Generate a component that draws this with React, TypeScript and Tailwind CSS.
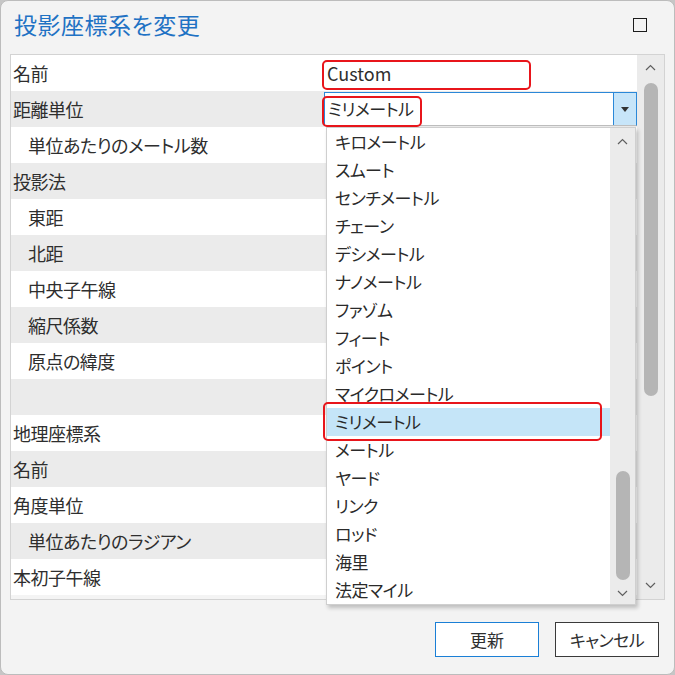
const font = "[font-family:'Noto_Sans_CJK_JP',sans-serif] [font-feature-settings:'palt']"

type Row = { label: string; indent?: boolean }

const rows: Row[] = [
  { label: "名前" },
  { label: "距離単位" },
  { label: "単位あたりのメートル数", indent: true },
  { label: "投影法" },
  { label: "東距", indent: true },
  { label: "北距", indent: true },
  { label: "中央子午線", indent: true },
  { label: "縮尺係数", indent: true },
  { label: "原点の緯度", indent: true },
  { label: "" },
  { label: "地理座標系" },
  { label: "名前" },
  { label: "角度単位" },
  { label: "単位あたりのラジアン", indent: true },
  { label: "本初子午線" },
]

const units = [
  "キロメートル",
  "スムート",
  "センチメートル",
  "チェーン",
  "デシメートル",
  "ナノメートル",
  "ファゾム",
  "フィート",
  "ポイント",
  "マイクロメートル",
  "ミリメートル",
  "メートル",
  "ヤード",
  "リンク",
  "ロッド",
  "海里",
  "法定マイル",
]

function Chevron({ up }: { up?: boolean }) {
  return (
    <svg width="11" height="7" viewBox="0 0 11 7" className="block">
      <polyline
        points={up ? "1,6 5.5,1.5 10,6" : "1,1 5.5,5.5 10,1"}
        fill="none"
        stroke="#5f5f5f"
        strokeWidth="1.2"
      />
    </svg>
  )
}

function ComboBox() {
  return (
    <div className="ml-px flex h-[34px] w-full border border-[#2b88d8] border-b-[#bdbdbd] bg-white">
      <div className="flex flex-1 items-center pl-[3px] text-[17px] tracking-[-0.5px] text-[#2a2a2a]">ミリメートル</div>
      <div className="flex w-[23px] items-center justify-center border-l border-[#2b88d8] bg-[#c7e5f9]">
        <svg width="8" height="5" viewBox="0 0 8 5">
          <polygon points="0,0 8,0 4,5" fill="#333" />
        </svg>
      </div>
    </div>
  )
}

export default function App() {
  return (
    <div className={`relative h-[675px] w-[675px] bg-[#c6c6c6] ${font}`}>
      <div className="flex h-full flex-col overflow-hidden rounded-[8px] border border-[#bcbcbc] bg-[#f3f3f3]">
        {/* Title bar */}
        <div className="flex h-[53px] shrink-0 items-center justify-between pb-[6px] pl-[13px] pr-[27px]">
          <h1 className="text-[23px] leading-none tracking-[0.5px] text-[#1f72c4]">投影座標系を変更</h1>
          <div className="h-[14px] w-[14px] border-[1.5px] border-[#1c1c1c]" />
        </div>

        {/* Property grid */}
        <div className="mx-[9px] flex h-[546px] shrink-0 border border-[#d3d3d3] bg-[#f4f4f4]">
          <div className="flex flex-1 flex-col">
            {rows.map((row, i) => (
              <div
                key={i}
                className={`flex h-[36px] shrink-0 items-center ${i % 2 === 1 ? "bg-[#ebebeb]" : "bg-white"}`}
              >
                <div
                  className={`w-[312px] shrink-0 text-[18px] tracking-[-0.5px] text-[#2e2e2e] ${row.indent ? "pl-[17px]" : "pl-[2px]"}`}
                >
                  {row.label}
                </div>
                <div className="flex h-full flex-1 items-center">
                  {i === 0 && <span className="pl-[4px] text-[18px] text-[#2e2e2e]">Custom</span>}
                  {i === 1 && <ComboBox />}
                </div>
              </div>
            ))}
          </div>
          <div className="flex w-[27px] shrink-0 flex-col items-center bg-[#ebebeb] py-[9px]">
            <Chevron up />
            <div className="mt-[12px] h-[313px] w-[14px] rounded-full bg-[#b5b5b5]" />
            <div className="flex-1" />
            <div className="mb-[1px]">
              <Chevron />
            </div>
          </div>
        </div>

        {/* Buttons */}
        <div className="flex justify-end gap-[16px] pr-[15px] pt-[22px]">
          <button className="h-[35px] w-[104px] border-[1.5px] border-[#1a7fd6] bg-white text-[17px] text-[#2e2e2e]">
            更新
          </button>
          <button className="h-[35px] w-[104px] border-[1.5px] border-[#3a3a3a] bg-white text-[17px] tracking-[-0.5px] text-[#2e2e2e]">
            キャンセル
          </button>
        </div>
      </div>

      {/* Dropdown list */}
      <div className="absolute left-[326px] top-[127px] flex h-[478px] w-[310px] border border-[#cfcfcf] bg-white shadow-[2px_3px_4px_rgba(0,0,0,0.22)]">
        <div className="flex flex-1 flex-col">
          {units.map((u, i) => (
            <div
              key={i}
              className={`flex h-[28px] shrink-0 items-center pl-[8px] text-[17px] tracking-[-0.5px] text-[#2a2a2a] ${i === 10 ? "bg-[#c5e5f8]" : ""}`}
            >
              {u}
            </div>
          ))}
        </div>
        <div className="flex w-[25px] shrink-0 flex-col items-center bg-[#ebebeb] pb-[7px] pt-[10px]">
          <Chevron up />
          <div className="flex-1" />
          <div className="mb-[10px] h-[109px] w-[14px] rounded-full bg-[#b5b5b5]" />
          <Chevron />
        </div>
      </div>

      {/* Red highlight boxes */}
      <div className="absolute left-[322px] top-[60px] h-[30px] w-[209px] rounded-[5px] border-2 border-[#e8151b]" />
      <div className="absolute left-[322px] top-[96px] h-[31px] w-[100px] rounded-[5px] border-2 border-[#e8151b]" />
      <div className="absolute left-[323px] top-[402px] h-[39px] w-[279px] rounded-[5px] border-2 border-[#e8151b]" />
    </div>
  )
}
